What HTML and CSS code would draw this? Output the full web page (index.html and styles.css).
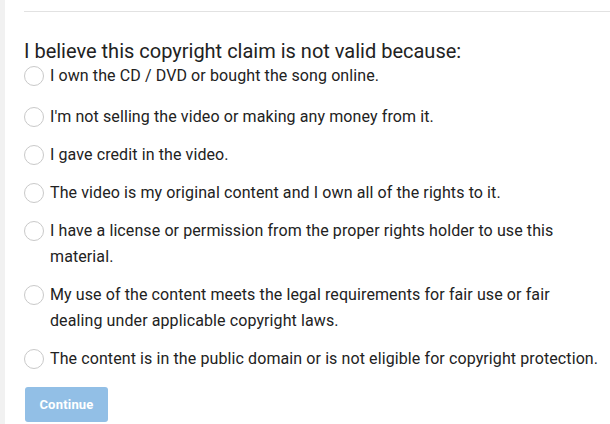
FILE: index.html
```html
<!DOCTYPE html>
<html>
<head>
<meta charset="utf-8">
<link rel="stylesheet" href="styles.css">
</head>
<body>
<div class="page">
  <div class="strip"></div>
  <div class="main">
    <hr class="rule">
    <h2 class="title">I believe this copyright claim is not valid because:</h2>
    <ul class="options">
      <li class="opt"><span class="radio"></span><span class="label">I own the CD / DVD or bought the song online.</span></li>
      <li class="opt"><span class="radio"></span><span class="label">I'm not selling the video or making any money from it.</span></li>
      <li class="opt"><span class="radio"></span><span class="label">I gave credit in the video.</span></li>
      <li class="opt"><span class="radio"></span><span class="label">The video is my original content and I own all of the rights to it.</span></li>
      <li class="opt"><span class="radio"></span><span class="label">I have a license or permission from the proper rights holder to use this material.</span></li>
      <li class="opt"><span class="radio"></span><span class="label">My use of the content meets the legal requirements for fair use or fair dealing under applicable copyright laws.</span></li>
      <li class="opt"><span class="radio"></span><span class="label">The content is in the public domain or is not eligible for copyright protection.</span></li>
    </ul>
    <button class="btn" disabled>Continue</button>
  </div>
</div>
</body>
</html>
```
FILE: styles.css
```css
html, body { margin: 0; padding: 0; background: #fff; }
body { font-family: Roboto, "Noto Sans", Arial, sans-serif; color: #222; }
.page { display: flex; min-height: 424px; }
.strip { width: 5px; background: #f1f1f1; flex: none; }
.main { flex: 1; padding-left: 19px; }
.rule { margin: 11px 0 0; border: 0; border-top: 1px solid #e2e2e2; height: 0; }
.title { font-size: 20px; font-weight: 400; line-height: 24px; margin: 27px 0 0; color: #222; }
.options { list-style: none; margin: 0; padding: 0; }
.opt { display: flex; align-items: flex-start; margin-bottom: 12px; }
.opt:first-child { margin-bottom: 15px; }
.opt:last-child { margin-bottom: 15px; }
.radio { flex: none; width: 18px; height: 18px; border: 1px solid #c9c9c9; border-radius: 50%; margin-top: 3px; margin-right: 6px; background: #fff; }
.label { font-size: 16px; line-height: 26px; letter-spacing: 0.1px; color: #222; padding-right: 8px; }
.btn { display: block; border: 0; border-radius: 3px; background: #92bfe6; color: #fff; font-family: Roboto, Arial, sans-serif; font-weight: 700; font-size: 13px; letter-spacing: 0.2px; width: 83px; height: 35px; padding: 0; margin-left: 1px; }
```
